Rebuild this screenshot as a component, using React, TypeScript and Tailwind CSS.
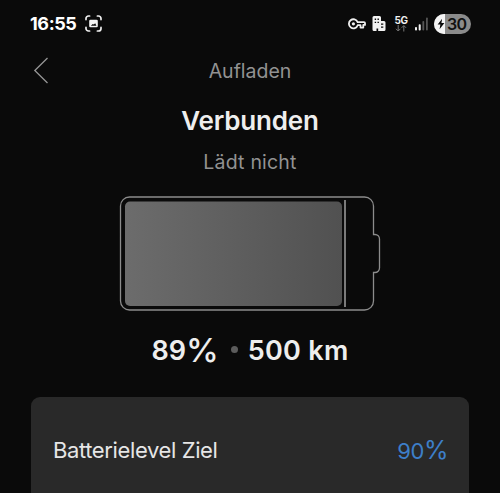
import type { ReactNode } from "react";

function StatusBar() {
  return (
    <div className="flex h-[47px] items-center pr-[29px] pl-[30px] text-white">
      <span className="w-[47px] pt-px text-[18px] leading-none font-bold tracking-[-0.4px] whitespace-nowrap">
        16:55
      </span>
      <svg className="ml-[8px] h-[17px] w-[17px]" viewBox="0 0 17 17" fill="none">
        <path
          d="M1 4.6V3.5A2.5 2.5 0 0 1 3.5 1H4.6M12.4 1h1.1A2.5 2.5 0 0 1 16 3.5V4.6M16 12.400v1.1a2.5 2.5 0 0 1-2.5 2.5H12.400M4.6 16H3.5A2.5 2.5 0 0 1 1 13.5V12.400"
          stroke="#f0f0f0"
          strokeWidth="1.7"
          strokeLinecap="round"
        />
        <rect x="4.2" y="4.7" width="8.6" height="7.6" rx="1.3" fill="#f4f4f4" />
        <path d="M5.8 10.8 7.800 9l1 .6 1.4-1.4 1.2 2.600z" fill="#0a0a0a" />
      </svg>
      <div className="ml-auto flex items-center">
        <KeyIcon />
        <BuildingIcon />
        <NetworkIcon />
        <SignalIcon />
        <div className="ml-[6px] flex h-[20px] w-[37px] items-center overflow-hidden rounded-full bg-[#8b8b8b]">
          <div className="flex h-full w-[11px] shrink-0 items-center justify-center bg-[#f4f4f4]">
            <svg className="ml-[2px] h-[12px] w-[8px]" viewBox="0 0 9 13">
              <path d="M5.8 0.5 0.7 7.2h3.1L2.9 12.5 8.3 5.5H5z" fill="#0a0a0a" />
            </svg>
          </div>
          <span className="ml-[2px] text-[16px] leading-none font-semibold tracking-[-0.8px] text-[#111]">
            30
          </span>
        </div>
      </div>
    </div>
  );
}

function KeyIcon() {
  return (
    <svg className="h-[12px] w-[18px]" viewBox="0 0 18 12" fill="none">
      <path
        d="M9.6 4.1H16a1 1 0 0 1 1 1v1.8h-1.7v2.7h-2.8V7.2H9.7A4.5 4.5 0 1 1 9.6 4.1Z"
        stroke="#f0f0f0"
        strokeWidth="1.8"
        strokeLinejoin="round"
      />
      <circle cx="5.4" cy="5.8" r="1.6" fill="#f0f0f0" />
    </svg>
  );
}

function BuildingIcon() {
  return (
    <svg className="ml-[6px] h-[15px] w-[14px]" viewBox="0 0 14 15">
      <path
        d="M2 0h5.5a1.5 1.5 0 0 1 1.5 1.5V5h3a1.5 1.5 0 0 1 1.5 1.5v7A1.5 1.5 0 0 1 12 15H6.2v-2.5H4.5V15H2a1.5 1.5 0 0 1-1.5-1.5v-12A1.5 1.5 0 0 1 2 0Z"
        fill="#f4f4f4"
      />
      <path
        d="M2.7 2.5h1.4v1.4H2.7zM5.5 2.5h1.4v1.4H5.5zM2.7 5.7h1.4v1.4H2.7zM5.5 5.7h1.4v1.4H5.5zM9 7.500h2.300v1.200H9zM9 10.500h2.300v1.200H9z"
        fill="#0a0a0a"
      />
    </svg>
  );
}

function NetworkIcon() {
  return (
    <div className="ml-[9px] flex w-[12px] flex-col items-center">
      <span className="text-[10px] leading-[9px] font-bold tracking-[-0.4px] text-[#f0f0f0]">
        5G
      </span>
      <svg className="h-[7px] w-[12px]" viewBox="0 0 12 7" fill="none" stroke="#777">
        <path d="M3.2 0v5.8M1 3.8l2.2 2.2 2.2-2.2M8.8 6.5V0.8M6.6 2.8 8.8 0.6l2.2 2.2" />
      </svg>
    </div>
  );
}

function SignalIcon() {
  return (
    <svg className="ml-[8px] h-[14px] w-[13px]" viewBox="0 0 13 14">
      <rect x="0" y="10" width="2" height="3.5" rx=".8" fill="#f0f0f0" />
      <rect x="3.7" y="7.2" width="2" height="6.3" rx=".8" fill="#f0f0f0" />
      <rect x="7.4" y="4" width="1.8" height="9.5" rx=".8" fill="#555" />
      <rect x="11" y="0.5" width="1.8" height="13" rx=".8" fill="#555" />
    </svg>
  );
}

function Battery() {
  return (
    <svg className="mx-auto mt-[16px] block h-[117px] w-[262px]" viewBox="0 0 262 117" fill="none">
      <defs>
        <linearGradient id="charge" x1="0" y1="0" x2="1" y2="0">
          <stop offset="0" stopColor="#6c6c6c" />
          <stop offset="1" stopColor="#515151" />
        </linearGradient>
      </defs>
      <path
        d="M10.5 2H245.5a9 9 0 0 1 9 9V39.5h1.5a4.5 4.5 0 0 1 4.5 4.5V73a4.5 4.5 0 0 1-4.5 4.5h-1.5V106a9 9 0 0 1-9 9H10.5a9 9 0 0 1-9-9V11a9 9 0 0 1 9-9Z"
        stroke="#8c8c8c"
        strokeWidth="1.3"
      />
      <rect x="6" y="6.5" width="217" height="104.5" rx="5" fill="url(#charge)" />
      <path d="M226 5v107" stroke="#a0a0a0" strokeWidth="1.5" />
    </svg>
  );
}

function SettingRow({ label, value }: { label: string; value: ReactNode }) {
  return (
    <div className="flex h-[107px] items-center justify-between pr-[21px] pl-[22px]">
      <span className="text-[22px] tracking-[-0.38px] text-[#e6e6e6]">{label}</span>
      <span className="flex items-center text-[22px] leading-none tracking-[-0.4px] text-[#3d7fc9]">
        {value}
      </span>
    </div>
  );
}

export default function App() {
  return (
    <div className="h-[493px] w-[500px] overflow-hidden bg-[#0a0a0a] font-['Inter','Liberation_Sans',sans-serif]">
      <StatusBar />
      <header className="grid h-[48px] grid-cols-[1fr_auto_1fr] items-center">
        <button type="button" aria-label="Zurück" className="ml-[33px] w-fit">
          <svg className="h-[28px] w-[16px]" viewBox="0 0 16 28" fill="none">
            <path d="M14.5 1 1.8 13.5l12.7 12.5" stroke="#969696" strokeWidth="1.3" />
          </svg>
        </button>
        <h1 className="pt-[2px] text-[19.5px] text-[#929292]">Aufladen</h1>
      </header>
      <main>
        <h2 className="h-[50px] text-center text-[26px] leading-[52px] font-semibold tracking-[-0.2px] text-[#eeeeee]">
          Verbunden
        </h2>
        <p className="h-[34px] text-center text-[19.5px] leading-[34px] tracking-[0.2px] text-[#929292]">
          Lädt nicht
        </p>
        <Battery />
        <div className="flex h-[76px] items-center justify-center text-[27px] leading-none font-semibold text-[#eeeeee]">
          <span className="flex items-center whitespace-nowrap">
            89<span className="text-[33px] font-medium tracking-[-1px]">%</span>
          </span>
          <span className="mr-[10px] mb-[2px] ml-[13px] h-[7px] w-[7px] rounded-full bg-[#5c5c5c]" />
          <span className="tracking-[0.3px] whitespace-nowrap">500 km</span>
        </div>
        <section className="mx-[31px] mt-[9px] h-[110px] rounded-t-[9px] bg-[#292929]">
          <SettingRow
            label="Batterielevel Ziel"
            value={
              <>
                90<span className="text-[25px] tracking-[-0.5px]">%</span>
              </>
            }
          />
        </section>
      </main>
    </div>
  );
}
